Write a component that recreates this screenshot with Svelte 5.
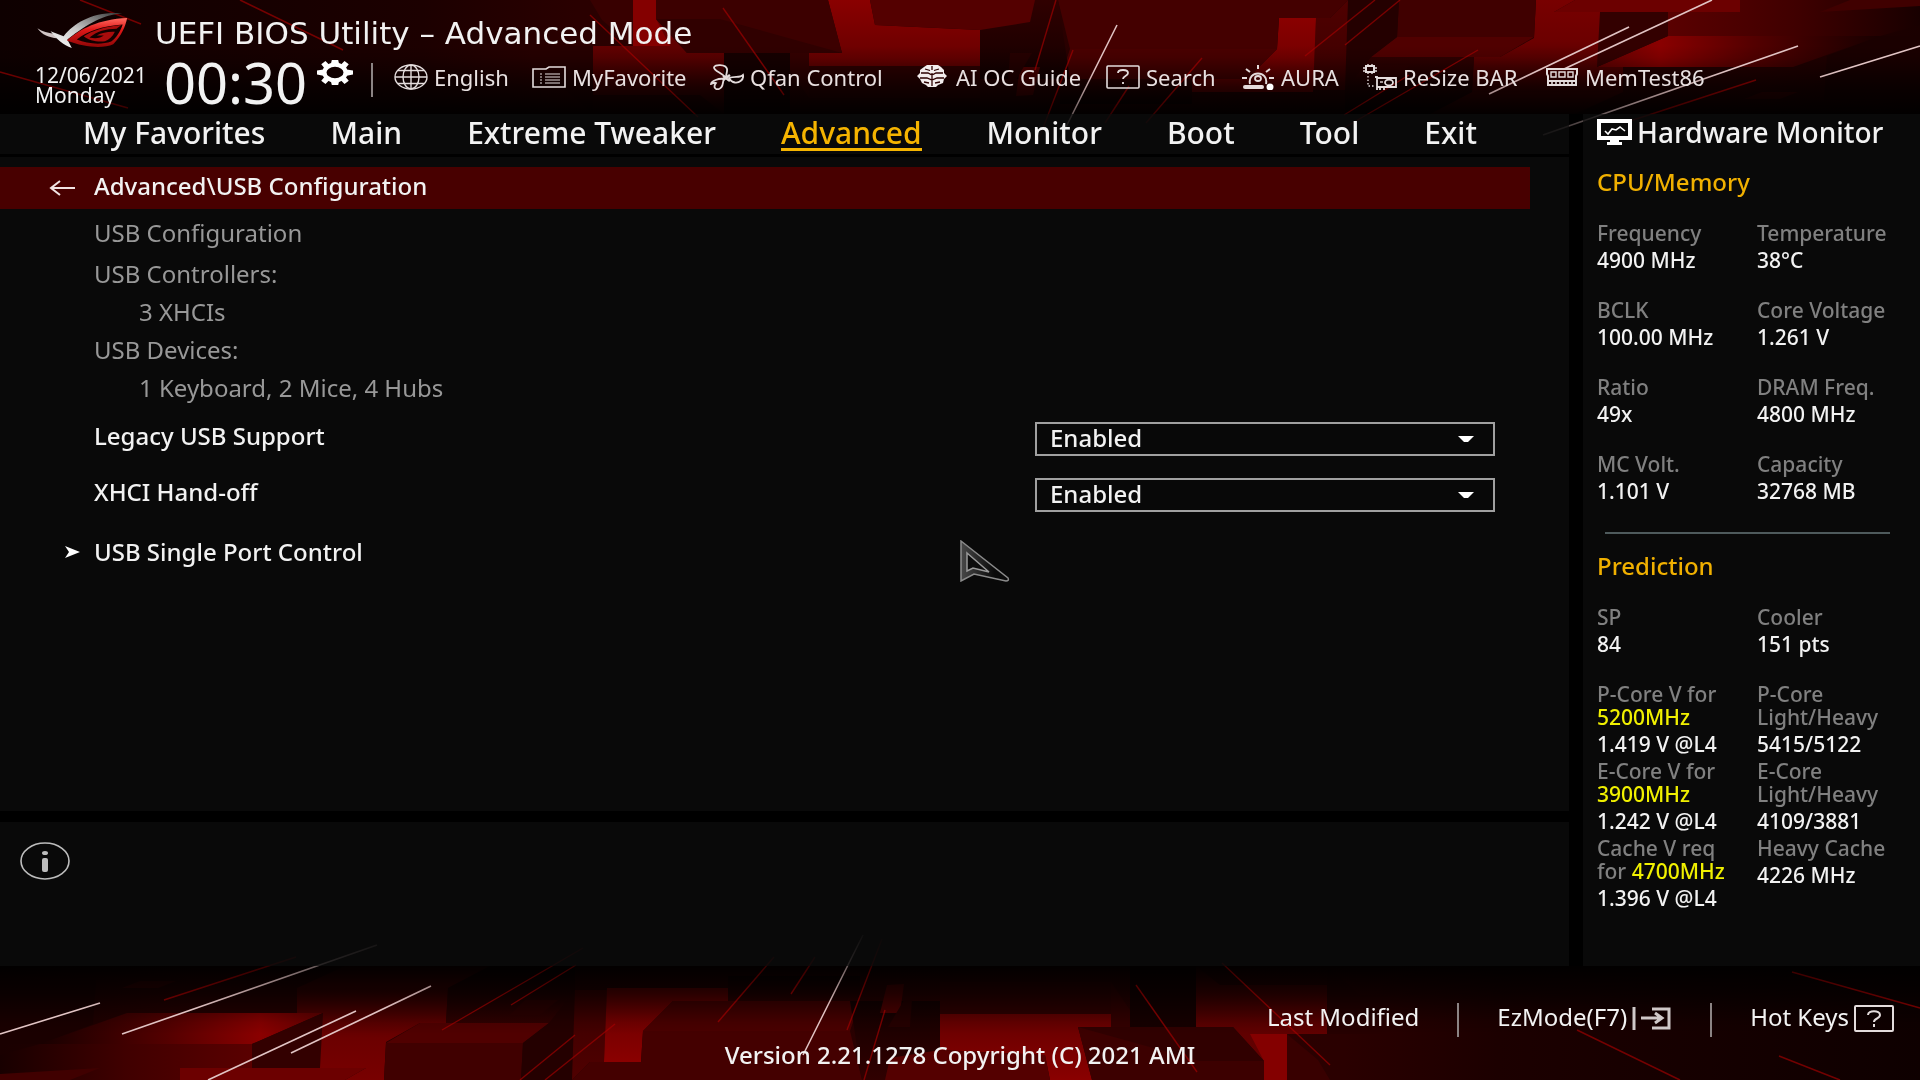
<script lang="ts">
    const tabs = ["My Favorites", "Main", "Extreme Tweaker", "Advanced", "Monitor", "Boot", "Tool", "Exit"];
    let activeTab = "Advanced";

    const tools = [
        { icon: "globe", label: "English" },
        { icon: "folder", label: "MyFavorite" },
        { icon: "fan", label: "Qfan Control" },
        { icon: "brain", label: "AI OC Guide" },
        { icon: "help", label: "Search" },
        { icon: "aura", label: "AURA" },
        { icon: "resize", label: "ReSize BAR" },
        { icon: "memory", label: "MemTest86" },
    ];

    const usbInfo = [
        { text: "USB Configuration", first: true },
        { text: "USB Controllers:" },
        { text: "3 XHCIs", nested: true },
        { text: "USB Devices:" },
        { text: "1 Keyboard, 2 Mice, 4 Hubs", nested: true },
    ];

    let settings = [
        { id: "legacy-usb", label: "Legacy USB Support", value: "Enabled" },
        { id: "xhci-handoff", label: "XHCI Hand-off", value: "Enabled" },
    ];

    const cpuMemory = [
        { label: "Frequency", value: "4900 MHz" },
        { label: "Temperature", value: "38°C" },
        { label: "BCLK", value: "100.00 MHz" },
        { label: "Core Voltage", value: "1.261 V" },
        { label: "Ratio", value: "49x" },
        { label: "DRAM Freq.", value: "4800 MHz" },
        { label: "MC Volt.", value: "1.101 V" },
        { label: "Capacity", value: "32768 MB" },
    ];

    // second holds the rest of a two line label, mark the highlighted clock
    const prediction = [
        { label: "SP", value: "84" },
        { label: "Cooler", value: "151 pts" },
        { label: "P-Core V for", mark: "5200MHz", value: "1.419 V @L4" },
        { label: "P-Core", second: "Light/Heavy", value: "5415/5122" },
        { label: "E-Core V for", mark: "3900MHz", value: "1.242 V @L4" },
        { label: "E-Core", second: "Light/Heavy", value: "4109/3881" },
        { label: "Cache V req", second: "for ", mark: "4700MHz", value: "1.396 V @L4" },
        { label: "Heavy Cache", value: "4226 MHz" },
    ];

    const whiteStreaks = [
        [0, 1034, 100, 1003],
        [122, 1034, 377, 945],
        [208, 1080, 356, 1011],
        [291, 1053, 431, 986],
        [803, 1055, 863, 935],
    ];

    const redStreaks = [
        [164, 1000, 296, 957],
        [442, 1030, 583, 948],
        [511, 1005, 576, 965],
        [545, 1080, 615, 1024],
        [520, 1080, 575, 1035],
        [718, 1022, 774, 957],
        [791, 994, 815, 957],
        [847, 1030, 882, 939],
        [864, 1080, 885, 1010],
        [1136, 985, 1197, 1072],
        [1222, 963, 1330, 1065],
        [1792, 972, 1920, 1008],
        [1577, 1030, 1680, 1080],
        [1779, 1056, 1840, 1080],
    ];
</script>

<div class="bios">
    <svg class="backdrop" viewBox="0 0 1920 1080" preserveAspectRatio="none" aria-hidden="true">
        <defs>
            <linearGradient id="base" x1="0" x2="1">
                <stop offset="0" stop-color="#1a0000" />
                <stop offset="0.1" stop-color="#260000" />
                <stop offset="0.3" stop-color="#260000" />
                <stop offset="0.55" stop-color="#2c0000" />
                <stop offset="0.7" stop-color="#2a0000" />
                <stop offset="0.78" stop-color="#1c0000" />
                <stop offset="1" stop-color="#0e0000" />
            </linearGradient>
            <linearGradient id="glow" x1="0" y1="0" x2="0" y2="1">
                <stop offset="0" stop-color="#380000" />
                <stop offset="0.55" stop-color="#6c0000" />
                <stop offset="1" stop-color="#780000" />
            </linearGradient>
            <linearGradient id="bright" x1="0" y1="0" x2="0" y2="1">
                <stop offset="0" stop-color="#640000" />
                <stop offset="1" stop-color="#8a0000" />
            </linearGradient>
            <linearGradient id="deep" x1="0" y1="0" x2="0" y2="1">
                <stop offset="0" stop-color="#140000" />
                <stop offset="1" stop-color="#300000" />
            </linearGradient>
            <linearGradient id="wall" x1="0" y1="0" x2="0" y2="1">
                <stop offset="0" stop-color="#3a0000" />
                <stop offset="1" stop-color="#500000" />
            </linearGradient>
            <linearGradient id="face" x1="0" x2="1">
                <stop offset="0" stop-color="#180000" />
                <stop offset="0.45" stop-color="#540000" />
                <stop offset="0.78" stop-color="#8a0000" />
                <stop offset="1" stop-color="#640000" />
            </linearGradient>
            <linearGradient id="front" x1="0" x2="1">
                <stop offset="0" stop-color="#180000" />
                <stop offset="0.5" stop-color="#400000" />
                <stop offset="1" stop-color="#5a0000" />
            </linearGradient>
            <linearGradient id="shade" x1="0" y1="0" x2="0" y2="1">
                <stop offset="0" stop-color="#000" stop-opacity="0.95" />
                <stop offset="0.25" stop-color="#000" stop-opacity="0.6" />
                <stop offset="0.5" stop-color="#000" stop-opacity="0.1" />
                <stop offset="0.6" stop-color="#000" stop-opacity="0" />
            </linearGradient>
            <linearGradient id="fade" gradientUnits="userSpaceOnUse" x1="0" y1="935" x2="0" y2="1010">
                <stop offset="0" stop-color="#fff" stop-opacity="0.1" />
                <stop offset="0.4" stop-color="#fff" stop-opacity="0.45" />
                <stop offset="1" stop-color="#fff" />
            </linearGradient>
            <mask id="streak-mask" maskUnits="userSpaceOnUse" x="0" y="930" width="1920" height="150">
                <rect x="0" y="930" width="1920" height="150" fill="url(#fade)" />
            </mask>
        </defs>
        <rect width="1920" height="1080" fill="#000" />
        <g id="cubes">
            <rect x="0" y="966" width="1920" height="114" fill="url(#base)" />
            <path d="M0 980H96L93 1024L40 1044H0Z" fill="#1a0000" />
            <path d="M140 981H176L158 988H122Z" fill="#380000" />
            <path d="M127 1013H323L252 1044H40Z" fill="url(#face)" />
            <path d="M40 1044H252V1080H0V1055Z" fill="url(#front)" />
            <path d="M323 1013L320 1080H252V1044Z" fill="#330000" />
            <path d="M100 1068L70 1080H0V1074Z" fill="#400000" />
            <path d="M180 1068H366L345 1080H180Z" fill="#6c0000" />
            <path d="M297 988L345 966H490L448 988Z" fill="#3c0000" />
            <path d="M297 988H448L446 1023H420L386 1042L384 1080H345L366 1068H320L323 1013H297Z" fill="url(#glow)" />
            <path d="M448 988L490 966H575V1000L549 1023H446Z" fill="url(#deep)" />
            <path d="M386 1043L420 1023H549L523 1043Z" fill="#500000" />
            <path d="M386 1043H523L521 1080H384Z" fill="#400000" />
            <path d="M549 1023L523 1043L521 1080H572L575 990Z" fill="#240000" />
            <path d="M510 1015L525 1000H558L540 1015Z" fill="#2e0000" />
            <path d="M575 990H607L604 1062H590L572 1080Z" fill="url(#wall)" />
            <path d="M607 988H728V1001H673L643 1031L641 1062H604Z" fill="url(#bright)" />
            <path d="M643 1031L673 1001H860L850 1031Z" fill="#4a0000" />
            <path d="M643 1031H850L862 1080H572L590 1062H641Z" fill="#440000" />
            <path d="M728 976H860V1001H728Z" fill="url(#deep)" />
            <path d="M850 1001H940V1050L885 1080H862Z" fill="url(#deep)" />
            <path d="M887 985L904 984L900 1013H880Z" fill="#540000" />
            <path d="M904 1000H912L910 1027H888Z" fill="#260000" />
            <path d="M940 982H1111V1014H940Z" fill="#300000" />
            <path d="M940 1014H1111V1027H1078L1092 1080H1050L1045 1055L940 1050Z" fill="url(#bright)" />
            <path d="M940 1050L1045 1055L1050 1080H885L890 1058Z" fill="#540000" />
            <path d="M1111 982L1130 1010V1027H1111Z" fill="#340000" />
            <path d="M1130 966H1196V1027H1130Z" fill="#160000" />
            <path d="M1196 966L1220 985H1327V1034H1287V1080H1264V1061L1233 1027H1196Z" fill="url(#glow)" opacity="0.8" />
            <path d="M1264 1061L1250 1034H1287V1080H1264Z" fill="#840000" />
            <path d="M1078 1027H1233L1264 1061H1092Z" fill="#300000" />
            <path d="M1078 1027L1092 1080H1264V1061H1200Z" fill="#3c0000" />
            <path d="M1287 1034H1387V995H1360L1327 966V1034Z" fill="#260000" />
            <path d="M1287 1034L1318 1060L1330 1080H1287Z" fill="#380000" />
            <rect x="0" y="965" width="1920" height="115" fill="url(#shade)" />
            <g mask="url(#streak-mask)" fill="none">
                {#each redStreaks as [x1, y1, x2, y2]}
                    <line {x1} {y1} {x2} {y2} stroke="#a80000" stroke-width="1.4" opacity="0.65" />
                {/each}
                {#each whiteStreaks as [x1, y1, x2, y2]}
                    <line {x1} {y1} {x2} {y2} stroke="#e2c4c4" stroke-width="1.6" />
                {/each}
            </g>
        </g>
        <use href="#cubes" transform="rotate(180 960 540)" />
    </svg>

    <header>
        <div class="brand">
            <svg class="logo" viewBox="90 36 222 110" preserveAspectRatio="none" aria-hidden="true">
                <defs>
                    <linearGradient id="steel" x1="0" y1="1" x2="1" y2="0">
                        <stop offset="0" stop-color="#fff" />
                        <stop offset="0.45" stop-color="#c8c8c8" />
                        <stop offset="1" stop-color="#333" />
                    </linearGradient>
                    <linearGradient id="blood" x1="0" y1="0" x2="0" y2="1">
                        <stop offset="0" stop-color="#ff6a60" />
                        <stop offset="0.4" stop-color="#e01818" />
                        <stop offset="1" stop-color="#8e0606" />
                    </linearGradient>
                </defs>
                <path d="M91 84C103 94 118 98 131 101L139 114C120 111 102 104 91 84Z" fill="#cfc4c4" />
                <path d="M123 93L155 108C182 68 226 34 298 40C250 46 218 68 164 118L175 143C154 134 138 116 123 93Z" fill="url(#steel)" />
                <path fill-rule="evenodd" d="M163 121C196 86 240 58 310 54C306 78 296 108 276 132C252 146 205 142 163 121ZM187 118C216 90 250 78 299 73C294 92 284 112 271 124C248 134 214 132 187 118Z" fill="url(#blood)" />
                <path d="M204 108C226 92 252 80 296 75L284 86C258 86 236 94 218 112C234 116 246 113 253 106H236C248 97 264 94 280 95C274 110 266 119 256 123C236 126 216 120 204 108Z" fill="#a80c0c" />
            </svg>
            <h1>UEFI BIOS Utility – Advanced Mode</h1>
        </div>
        <div class="status">
            <div class="date">
                <div>12/06/2021</div>
                <div>Monday</div>
            </div>
            <div class="clock">00:30</div>
            <button class="gear" aria-label="Set time">
                <svg viewBox="0 0 34 24" preserveAspectRatio="none">
                    <ellipse cx="17" cy="12" rx="10" ry="7.500" fill="none" stroke="#fff" stroke-width="4" />
                    <path d="M14 0H20L21 4H13ZM14 24H20L21 20H13ZM0 10L6 9V15L0 14ZM34 10L28 9V15L34 14ZM4 4L8 1L12 5L8 9ZM30 4L26 1L22 5L26 9ZM4 20L8 23L12 19L8 15ZM30 20L26 23L22 19L26 15Z" fill="#fff" />
                </svg>
            </button>
            <nav class="tools" aria-label="Tools">
                {#each tools as tool}
                    <button class="tool">
                        <svg viewBox="0 0 34 26" fill="none" stroke="#e4dcdc" stroke-width="1.4" aria-hidden="true">
                            {#if tool.icon === "globe"}
                                <ellipse cx="17" cy="13" rx="16" ry="12" />
                                <ellipse cx="17" cy="13" rx="8" ry="12" />
                                <path d="M17 1V25M1 13H33M4 6.500H30M4 19.500H30" />
                            {:else if tool.icon === "folder"}
                                <path d="M1 23V5H14L17 3H33V23Z" stroke-width="1.600" />
                                <path d="M8 10H10M13 10H28M8 13H10M13 13H28M8 16H10M13 16H28M8 19H10M13 19H28" stroke-width="1" />
                            {:else if tool.icon === "fan"}
                                <path d="M15 13C12 9 4 7 4 3.500C4 0 16 0 17 5C17.500 8 16 10 16 13ZM19 14C25 12 30 14 33 11C34 16 29 19 25 18.500C22 18 20 16 19 14ZM14 15C9 14 1 17 1 20C2 20 4 18 6 19C3 23 5 26 9 25C14 23 12 19 14 15Z" stroke-width="1.800" />
                                <path d="M13 12L20 17M20 11L13 16" stroke-width="2.600" />
                            {:else if tool.icon === "brain"}
                                <path d="M8 3L11 1H22L25 3L28 6V9L31 12L28 15L27 19L22 21L20 23H12L10 21L6 19L4 15L1 12L4 9V6Z" fill="#f3eded" stroke="none" />
                                <path d="M16 2V6M16 9V22M9 5L14 6.500M23 5L18 6.500M5 9H12L16 11L20 9H27M4 14H11L16 16L21 14H28M8 18L13 19M24 18L19 19" stroke="#2c0000" stroke-width="1.300" />
                            {:else if tool.icon === "help"}
                                <rect x="1" y="2" width="32" height="22" rx="1" stroke-width="1.600" />
                                <path d="M12 9C12 5 22 5 22 9C22 12 17 12 17 15M17 18V20" stroke-width="1.800" />
                            {:else if tool.icon === "aura"}
                                <path d="M9 20C6 6 28 6 25 20M17 1V5M5 5L9 8M29 5L25 8M1 14H6M33 14H28" stroke-width="2" />
                                <ellipse cx="17" cy="14.500" rx="3" ry="2.500" stroke-width="1.800" />
                                <path d="M4 23H21" stroke-width="4" stroke-linecap="round" />
                                <circle cx="29" cy="23" r="3.500" fill="#fff" stroke="none" />
                            {:else if tool.icon === "resize"}
                                <rect x="3" y="2" width="8" height="6" stroke-width="2" />
                                <path d="M5 0V2M9 0V2M5 8V10M9 8V10M0 4H3M0 7H3M11 4H14M11 7H14" />
                                <path d="M5 12V22H12" stroke-dasharray="1.500 2" />
                                <path d="M12 13H14V26M14 14H33V23H14M17 26V23M21 26V23" stroke-width="1.800" />
                                <ellipse cx="26" cy="18.500" rx="4" ry="3" stroke-width="1.800" />
                                <path d="M17 18H20" />
                            {:else}
                                <path d="M2 5H32V10L31 12V17H3V12L2 10ZM3 17V21H31V17" stroke-width="2" />
                                <path d="M6 8H11V13H6ZM14 8H20V13H14ZM23 8H28V13H23Z" stroke-width="1.400" />
                                <path d="M7 17V21M11 17V21M15 17V21M19 17V21M23 17V21M27 17V21" stroke-width="1.600" />
                            {/if}
                        </svg>
                        {tool.label}
                    </button>
                {/each}
            </nav>
        </div>
    </header>

    <main>
        <div class="left">
            <nav class="tabs panel" aria-label="Menu">
                {#each tabs as tab}
                    <button class="tab" class:active={tab === activeTab} on:click={() => (activeTab = tab)}>{tab}</button>
                {/each}
            </nav>
            <section class="content panel">
                <div class="path">
                    <button class="back" aria-label="Back">
                        <svg viewBox="0 0 26 16" fill="none" stroke="#f2e4e4" stroke-width="2">
                            <path d="M26 8H2M11 1L2 8L11 15" />
                        </svg>
                    </button>
                    <h2>Advanced\USB Configuration</h2>
                </div>
                {#each usbInfo as line}
                    <div class="info-line" class:first={line.first} class:nested={line.nested}>{line.text}</div>
                {/each}
                <div class="settings">
                    {#each settings as setting}
                        <div class="setting">
                            <label for={setting.id}>{setting.label}</label>
                            <div class="select-box">
                                <select id={setting.id} bind:value={setting.value}>
                                    <option>Enabled</option>
                                    <option>Disabled</option>
                                </select>
                                <svg class="caret" viewBox="0 0 16 6" aria-hidden="true">
                                    <path d="M0 0H16L10 6H6Z" fill="#fff" />
                                </svg>
                            </div>
                        </div>
                    {/each}
                </div>
                <a class="submenu" href="#usb-single-port">
                    <svg viewBox="0 0 15 12" aria-hidden="true"><path d="M0 0L15 6L0 12L4 6Z" fill="#fff" /></svg>
                    USB Single Port Control
                </a>
            </section>
            <section class="help panel" aria-label="Help">
                <svg viewBox="0 0 50 38" fill="none" stroke="#bdbdbd">
                    <ellipse cx="25" cy="19" rx="24" ry="18" stroke-width="1.600" />
                    <ellipse cx="25" cy="11" rx="3" ry="2" fill="#bdbdbd" stroke="none" />
                    <rect x="22" y="16" width="6" height="14" rx="2" fill="#bdbdbd" stroke="none" />
                </svg>
            </section>
        </div>

        <aside class="monitor panel">
            <h2>
                <svg viewBox="0 0 35 26" aria-hidden="true">
                    <path d="M2 2H33V19H2Z" fill="none" stroke="#fff" stroke-width="4" />
                    <path d="M13 19H22V23H25V26H10V23H13Z" fill="#fff" />
                    <path d="M8 12L11 15L15 10L19 11L23 8L28 12" fill="none" stroke="#fff" stroke-width="1.600" />
                </svg>
                Hardware Monitor
            </h2>
            <h3>CPU/Memory</h3>
            <dl>
                {#each cpuMemory as item}
                    <div class="reading">
                        <dt>{item.label}</dt>
                        <dd>{item.value}</dd>
                    </div>
                {/each}
            </dl>
            <hr />
            <h3>Prediction</h3>
            <dl>
                {#each prediction as item}
                    <div class="reading">
                        <dt>
                            {item.label}
                            {#if item.second || item.mark}
                                <br />{item.second ?? ""}<mark>{item.mark ?? ""}</mark>
                            {/if}
                        </dt>
                        <dd>{item.value}</dd>
                    </div>
                {/each}
            </dl>
        </aside>
    </main>

    <footer>
        <div class="actions">
            <button>Last Modified</button>
            <button>
                EzMode(F7)
                <svg viewBox="0 0 40 27" fill="none" stroke="#cfc8c8" stroke-width="3" aria-hidden="true">
                    <path d="M2 2V25M9 13H29M23 8L30 13L23 18M20 4H37V23H20" />
                </svg>
            </button>
            <button>
                Hot Keys
                <svg viewBox="0 0 40 27" fill="none" stroke="#e4dcdc" stroke-width="2" aria-hidden="true">
                    <rect x="1" y="1" width="38" height="25" rx="1" />
                    <path d="M14 10C14 5 26 5 26 10C26 14 20 13 20 17M20 19V22" />
                </svg>
            </button>
        </div>
        <div class="version">Version 2.21.1278 Copyright (C) 2021 AMI</div>
    </footer>

    <svg class="pointer" viewBox="0 0 50 42" aria-hidden="true">
        <defs>
            <linearGradient id="pointer-fill" x1="0" x2="1">
                <stop offset="0" stop-color="#484848" />
                <stop offset="0.7" stop-color="#0a0a0a" />
            </linearGradient>
        </defs>
        <path d="M1 1L48 38C49 40 48 41 46 41L14 34L1 41Z" fill="url(#pointer-fill)" stroke="#8a8a8a" stroke-width="1.500" />
        <path d="M7 13L29 32L13 28L7 31Z" fill="#0c0c0c" stroke="#9a9a9a" stroke-width="1.500" />
    </svg>
</div>

<style>
    :global(body) {
        margin: 0;
        background: #000;
    }

    .bios {
        position: relative;
        isolation: isolate;
        display: grid;
        grid-template-rows: 114px 1fr 114px;
        min-height: 100vh;
        color: #f2f2f2;
        font-family: "Noto Sans", "Open Sans", sans-serif;
        font-size: 24px;
        line-height: 28px;
    }

    .backdrop {
        position: absolute;
        inset: 0;
        z-index: -1;
        width: 100%;
        height: 100%;
    }

    .panel {
        background: rgba(13, 13, 13, 0.7);
    }

    h1,
    h2,
    h3,
    dl,
    dd {
        margin: 0;
        font-weight: 500;
    }

    button {
        display: flex;
        align-items: center;
        padding: 0;
        border: 0;
        background: none;
        color: inherit;
        font: inherit;
        white-space: nowrap;
        cursor: pointer;
    }

    svg {
        display: block;
        flex: none;
    }

    .brand {
        display: flex;
        align-items: flex-start;
        gap: 27px;
        height: 50px;
        padding: 12px 0 0 37px;
        box-sizing: border-box;
    }

    .logo {
        width: 91px;
        height: 37px;
    }

    h1 {
        padding-top: 3px;
        font-family: "DejaVu Sans", sans-serif;
        font-size: 31px;
        font-weight: 400;
        line-height: 36px;
    }

    .status {
        display: flex;
        height: 64px;
        padding: 0 209px 0 35px;
    }

    .date {
        width: 129px;
        padding-top: 15px;
        font-size: 21px;
        line-height: 20px;
    }

    .clock {
        width: 153px;
        font-size: 56px;
        line-height: 64px;
    }

    .gear {
        align-self: flex-start;
        margin-top: 10px;
    }

    .gear svg {
        width: 36px;
        height: 25px;
    }

    .tools {
        display: grid;
        flex: 1;
        grid-template-columns: 138fr 178fr 206fr 190fr 135fr 122fr 182fr 166fr;
        height: 34px;
        margin: 13px 0 0 18px;
        padding-left: 21px;
        border-left: 2px solid #8c8484;
        font-size: 22px;
    }

    .tool {
        align-items: flex-start;
        gap: 6px;
        color: #e8e0e0;
    }

    .tool svg {
        width: 34px;
        height: 26px;
        margin-top: 1px;
    }

    main {
        display: grid;
        grid-template-columns: 1fr 337px;
        gap: 14px;
    }

    .left {
        display: flex;
        flex-direction: column;
    }

    .tabs {
        display: flex;
        align-items: flex-start;
        justify-content: space-between;
        height: 40px;
        margin-bottom: 3px;
        padding: 0 92px 0 83px;
        font-size: 30px;
        line-height: 36px;
    }

    .tab {
        height: 37px;
        padding-top: 3px;
        border-bottom: 3px solid transparent;
        box-sizing: border-box;
        font-weight: 500;
    }

    .tab.active {
        border-color: #f5b400;
        color: #f5b400;
    }

    .content {
        flex: 1;
        padding-top: 10px;
    }

    .path {
        display: flex;
        align-items: center;
        height: 42px;
        margin-right: 39px;
        padding-left: 49px;
        background: #480000;
    }

    .path h2 {
        padding-bottom: 4px;
        font-size: 24px;
    }

    .back {
        width: 45px;
    }

    .back svg {
        width: 26px;
        height: 16px;
    }

    .info-line {
        padding-left: 94px;
        color: #989898;
        line-height: 38px;
    }

    .info-line.first {
        padding: 4px 0 2px 94px;
        line-height: 40px;
    }

    .info-line.nested {
        padding-left: 139px;
    }

    .settings {
        display: grid;
        gap: 22px;
        padding: 15px 74px 0 94px;
    }

    .setting {
        display: flex;
        align-items: center;
        justify-content: space-between;
        height: 34px;
    }

    .setting label,
    .submenu {
        font-weight: 500;
    }

    .setting label {
        padding-bottom: 6px;
    }

    .select-box {
        position: relative;
        width: 460px;
    }

    select {
        display: block;
        width: 100%;
        height: 34px;
        padding: 0 13px 4px;
        border: 2px solid #a0a0a0;
        border-radius: 0;
        background: #080808;
        color: inherit;
        font: inherit;
        font-weight: 500;
        line-height: 28px;
        appearance: none;
    }

    .caret {
        position: absolute;
        top: 14px;
        right: 21px;
        width: 16px;
        height: 6px;
        pointer-events: none;
    }

    .submenu {
        display: flex;
        align-items: center;
        gap: 14px;
        margin: 26px 0 0 65px;
        color: inherit;
        text-decoration: none;
    }

    .submenu svg {
        width: 15px;
        height: 12px;
    }

    .help {
        height: 144px;
        margin-top: 11px;
        padding: 20px;
        box-sizing: border-box;
    }

    .help svg {
        width: 50px;
        height: 38px;
    }

    .monitor {
        padding: 0 30px 0 14px;
    }

    .monitor h2 {
        display: flex;
        align-items: center;
        gap: 5px;
        height: 36px;
        font-size: 28px;
        white-space: nowrap;
    }

    .monitor h2 svg {
        width: 35px;
        height: 26px;
    }

    .monitor h3 {
        padding: 18px 0 26px;
        color: #f0b000;
        font-size: 24px;
        font-weight: 500;
        line-height: 28px;
    }

    dl {
        display: grid;
        grid-template-columns: 160px 1fr;
        font-size: 21px;
        white-space: nowrap;
    }

    .reading {
        min-height: 77px;
    }

    dt {
        color: #808080;
        line-height: 23px;
    }

    dd {
        line-height: 31px;
    }

    mark {
        background: none;
        color: #f0f000;
        font-weight: 500;
    }

    hr {
        height: 2px;
        margin: 2px 0 0 8px;
        border: 0;
        background: #4e5a5c;
    }

    .actions {
        display: flex;
        justify-content: flex-end;
        padding: 37px 26px 0 0;
    }

    .actions button {
        align-items: flex-start;
        gap: 5px;
        height: 34px;
        padding: 0 38px;
    }

    .actions button + button {
        border-left: 2px solid #8c8484;
    }

    .actions button:last-child {
        padding-right: 0;
    }

    .actions svg {
        width: 40px;
        height: 27px;
        margin-top: 2px;
    }

    .version {
        padding-top: 4px;
        text-align: center;
        font-weight: 500;
    }

    .pointer {
        position: absolute;
        top: 50%;
        left: 50%;
        width: 50px;
        height: 42px;
        pointer-events: none;
    }
</style>
